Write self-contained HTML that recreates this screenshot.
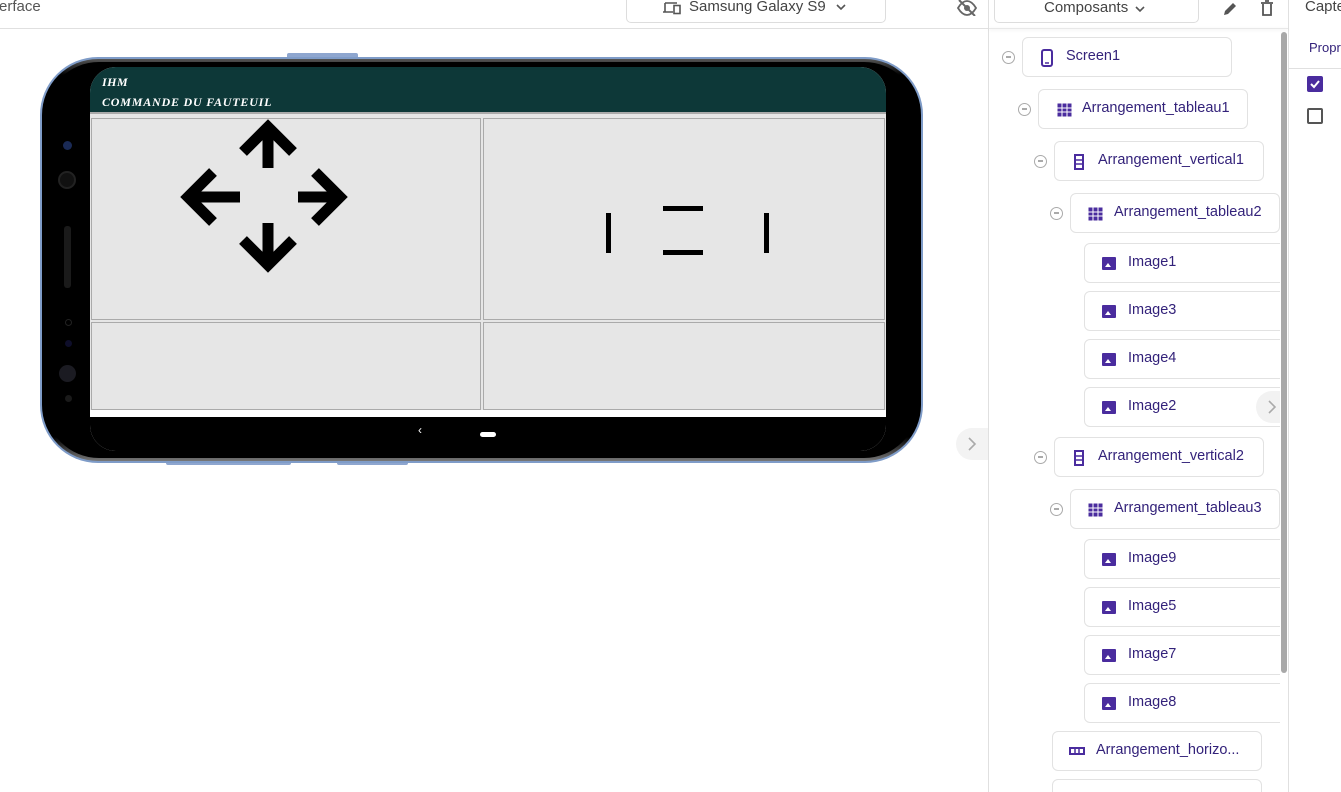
<!DOCTYPE html>
<html style="overflow:hidden;width:1341px;height:792px"><head><meta charset="utf-8"><style>
*{margin:0;padding:0;box-sizing:border-box}
body{width:1341px;height:792px;overflow:hidden;background:#fff;font-family:"Liberation Sans",sans-serif;position:relative}
.a{position:absolute}
.box{position:absolute;border:1px solid #e2e2e2;border-radius:6px;background:#fff;height:40px;color:#33227a;font-size:14.5px;}
.box span{position:absolute;top:10px}
.mi{position:absolute;width:13px;height:13px;border:1.5px solid #aaa;border-radius:50%}
.mi:after{content:"";position:absolute;left:2.5px;top:4.3px;width:5px;height:1.3px;background:#aaa}
.img{position:absolute;left:17px;top:13px;width:14px;height:13px;background:#4a2c9e;border-radius:1px}
.img:after{content:"";position:absolute;left:3px;top:6px;border-left:3px solid transparent;border-right:3px solid transparent;border-bottom:4px solid #fff}
.cell{position:absolute;background:#e6e6e6;border:1px solid #aaa}
#clip{position:absolute;left:989px;top:29px;width:291px;height:763px;overflow:hidden}
#clip > *{margin-left:-989px;margin-top:-29px}
</style></head><body>
<!-- top bar -->
<div class="a" style="left:0;top:28px;width:988px;height:1px;background:#e0e0e0"></div>
<div class="a" style="left:-1px;top:-2px;font-size:15px;color:#555">erface</div>
<div class="a" style="left:626px;top:-6px;width:260px;height:29px;border:1px solid #ddd;border-radius:5px"></div>
<svg class="a" style="left:662px;top:1px" width="20" height="14" viewBox="0 0 20 14"><path d="M3 2h12M3 2v9M1 11h10" stroke="#555" stroke-width="1.6" fill="none"/><rect x="12" y="4.5" width="6" height="8" fill="none" stroke="#555" stroke-width="1.6"/></svg>
<div class="a" style="left:689px;top:-2px;font-size:15px;color:#444">Samsung Galaxy S9</div>
<svg class="a" style="left:836px;top:3px" width="10" height="8"><path d="M1 2l4 4 4-4" stroke="#555" stroke-width="1.6" fill="none"/></svg>
<svg class="a" style="left:957px;top:0" width="20" height="16" viewBox="0 0 20 16"><path d="M1 8c3-5 6-7 9-7s6 2 9 7c-3 5-6 7-9 7s-6-2-9-7z" fill="none" stroke="#666" stroke-width="1.8"/><circle cx="10" cy="8" r="3" fill="#666"/><path d="M2 0l16 16" stroke="#666" stroke-width="2"/></svg>
<div class="a" style="left:988px;top:0;width:1px;height:792px;background:#e0e0e0"></div>
<div class="a" style="left:1288px;top:0;width:1px;height:792px;background:#e0e0e0"></div>
<div class="a" style="left:994px;top:-6px;width:205px;height:29px;border:1px solid #ddd;border-radius:5px;background:#fff"></div>
<div class="a" style="left:1044px;top:-1px;font-size:15px;color:#444">Composants</div>
<svg class="a" style="left:1135px;top:5px" width="10" height="8"><path d="M1 2l4 4 4-4" stroke="#555" stroke-width="1.6" fill="none"/></svg>
<svg class="a" style="left:1222px;top:1px" width="16" height="16"><path d="M2 14l1-4 8-8 3 3-8 8z" fill="#555"/></svg>
<svg class="a" style="left:1260px;top:0" width="14" height="17"><path d="M1 3h12M5 1h4M3 4v11h8V4" fill="none" stroke="#555" stroke-width="1.8"/></svg>
<div class="a" style="left:989px;top:28px;width:299px;height:1px;background:#e8e8e8;box-shadow:0 1px 3px rgba(0,0,0,.1)"></div>
<div class="a" style="left:1305px;top:-2px;font-size:15px;color:#444">Capte</div>
<div class="a" style="left:1309px;top:40px;font-size:13px;color:#33227a">Propr</div>
<div class="a" style="left:1289px;top:68px;width:52px;height:1px;background:#e0e0e0"></div>
<div class="a" style="left:1307px;top:76px;width:16px;height:16px;background:#4a2c9e;border-radius:2px"></div>
<svg class="a" style="left:1308px;top:77px" width="14" height="14"><path d="M3 7l3 3 5-6" stroke="#fff" stroke-width="2" fill="none"/></svg>
<div class="a" style="left:1307px;top:108px;width:16px;height:16px;border:2px solid #555;border-radius:2px"></div>

<!-- phone -->
<div class="a" style="left:166px;top:459px;width:125px;height:6px;background:#8ea6cf;border-radius:2px"></div>
<div class="a" style="left:337px;top:459px;width:71px;height:6px;background:#8ea6cf;border-radius:2px"></div>
<div class="a" style="left:287px;top:53px;width:71px;height:6px;background:#8ea6cf;border-radius:2px"></div>
<div class="a" style="left:40px;top:57px;width:883px;height:406px;border-radius:58px;background:#7f9cc8"></div>
<div class="a" style="left:42px;top:59px;width:879px;height:402px;border-radius:56px;background:linear-gradient(#555,#000 4%,#000 94%,#777)"></div>
<div class="a" style="left:45px;top:62px;width:873px;height:396px;border-radius:54px;background:#000"></div>
<div class="a" style="left:63px;top:141px;width:9px;height:9px;border-radius:50%;background:#1a2a55"></div>
<div class="a" style="left:58px;top:171px;width:18px;height:18px;border-radius:50%;background:#111;border:2px solid #222"></div>
<div class="a" style="left:64px;top:226px;width:7px;height:62px;border-radius:3px;background:#1a1a1a"></div>
<div class="a" style="left:65px;top:319px;width:7px;height:7px;border-radius:50%;border:1px solid #222"></div>
<div class="a" style="left:65px;top:340px;width:7px;height:7px;border-radius:50%;background:#0e0e2a"></div>
<div class="a" style="left:59px;top:365px;width:17px;height:17px;border-radius:50%;background:#1b1b22"></div>
<div class="a" style="left:65px;top:395px;width:7px;height:7px;border-radius:50%;background:#1a1a1a"></div>
<!-- screen -->
<div class="a" style="left:90px;top:67px;width:796px;height:384px;border-radius:26px;overflow:hidden;background:#fff">
 <div class="a" style="left:0;top:0;width:796px;height:45px;background:#0d3838"></div>
 <div class="a" style="left:12px;top:8px;font:italic bold 12px 'Liberation Serif',serif;color:#fff;letter-spacing:.5px">IHM</div>
 <div class="a" style="left:12px;top:28px;font:italic bold 12px 'Liberation Serif',serif;color:#fff;letter-spacing:.8px">COMMANDE DU FAUTEUIL</div>
 <div class="a" style="left:0;top:45px;width:796px;height:298px;background:#e6e6e6;border-top:2px solid #aaa"></div>
 <div class="cell" style="left:1px;top:51px;width:390px;height:202px"></div>
 <div class="cell" style="left:393px;top:51px;width:402px;height:202px"></div>
 <div class="cell" style="left:1px;top:255px;width:390px;height:88px"></div>
 <div class="cell" style="left:393px;top:255px;width:402px;height:88px"></div>
 <div class="a" style="left:0;top:350px;width:796px;height:34px;background:#000"></div>
 <div class="a" style="left:328px;top:356px;color:#fff;font-size:12px">‹</div>
 <div class="a" style="left:390px;top:365px;width:16px;height:5px;border-radius:3px;background:#fff"></div>
</div>
<svg class="a" style="left:170px;top:115px" width="190" height="165">
 <g stroke="#000" stroke-width="11" fill="none" stroke-linejoin="miter" stroke-miterlimit="10">
  <path d="M98 53V12M73 37l25-25 25 25"/>
  <path d="M98 108V150M73 125l25 25 25-25"/>
  <path d="M70 82H18M43 57l-25 25 25 25"/>
  <path d="M128 82h42M145 57l25 25-25 25"/>
 </g>
</svg>
<div class="a" style="left:606px;top:213px;width:5px;height:40px;background:#000"></div>
<div class="a" style="left:764px;top:213px;width:5px;height:40px;background:#000"></div>
<div class="a" style="left:663px;top:206px;width:40px;height:5px;background:#000"></div>
<div class="a" style="left:663px;top:250px;width:40px;height:5px;background:#000"></div>
<div class="a" style="left:956px;top:428px;width:32px;height:32px;border-radius:16px 0 0 16px;background:#f3f3f3"></div>
<svg class="a" style="left:967px;top:437px" width="10" height="14"><path d="M2 1l6 6-6 6" stroke="#aaa" stroke-width="1.6" fill="none"/></svg>

<!-- tree -->
<div id="clip"><div class="a" style="left:0;top:0;width:1341px;height:792px">
<div class="mi" style="left:1002px;top:51px"></div>
<div class="box" style="left:1022px;top:37px;width:210px"><svg class="a" style="left:18px;top:11px" width="12" height="18"><rect x="1" y="1" width="10" height="16" rx="2" fill="none" stroke="#4a2c9e" stroke-width="2"/><path d="M4 14h4" stroke="#4a2c9e" stroke-width="1.5"/></svg><span style="left:43px">Screen1</span></div>
<div class="mi" style="left:1018px;top:103px"></div>
<div class="box" style="left:1038px;top:89px;width:210px"><svg class="a" style="left:18px;top:13px" width="15" height="14"><rect x="0.5" y="0.5" width="14" height="13" fill="#4a2c9e"/><path d="M0 5h15M0 9h15M5 0v14M10 0v14" stroke="#fff" stroke-width="1"/></svg><span style="left:43px">Arrangement_tableau1</span></div>
<div class="mi" style="left:1034px;top:155px"></div>
<div class="box" style="left:1054px;top:141px;width:210px"><svg class="a" style="left:19px;top:12px" width="10" height="16"><rect x="1" y="1" width="8" height="14" fill="none" stroke="#4a2c9e" stroke-width="2"/><path d="M1 6h8M1 10h8" stroke="#4a2c9e" stroke-width="1.5"/></svg><span style="left:43px">Arrangement_vertical1</span></div>
<div class="mi" style="left:1050px;top:207px"></div>
<div class="box" style="left:1070px;top:193px;width:210px"><svg class="a" style="left:17px;top:13px" width="15" height="14"><rect x="0.5" y="0.5" width="14" height="13" fill="#4a2c9e"/><path d="M0 5h15M0 9h15M5 0v14M10 0v14" stroke="#fff" stroke-width="1"/></svg><span style="left:43px">Arrangement_tableau2</span></div>
<div class="box" style="left:1084px;top:243px;width:220px"><div class="img"></div><span style="left:43px">Image1</span></div>
<div class="box" style="left:1084px;top:291px;width:220px"><div class="img"></div><span style="left:43px">Image3</span></div>
<div class="box" style="left:1084px;top:339px;width:220px"><div class="img"></div><span style="left:43px">Image4</span></div>
<div class="box" style="left:1084px;top:387px;width:220px"><div class="img"></div><span style="left:43px">Image2</span></div>
<div class="a" style="left:1256px;top:391px;width:30px;height:32px;border-radius:16px 0 0 16px;background:#f2f2f2"></div>
<svg class="a" style="left:1267px;top:400px" width="10" height="14"><path d="M2 1l6 6-6 6" stroke="#aaa" stroke-width="1.6" fill="none"/></svg>
<div class="mi" style="left:1034px;top:451px"></div>
<div class="box" style="left:1054px;top:437px;width:210px"><svg class="a" style="left:19px;top:12px" width="10" height="16"><rect x="1" y="1" width="8" height="14" fill="none" stroke="#4a2c9e" stroke-width="2"/><path d="M1 6h8M1 10h8" stroke="#4a2c9e" stroke-width="1.5"/></svg><span style="left:43px">Arrangement_vertical2</span></div>
<div class="mi" style="left:1050px;top:503px"></div>
<div class="box" style="left:1070px;top:489px;width:210px"><svg class="a" style="left:17px;top:13px" width="15" height="14"><rect x="0.5" y="0.5" width="14" height="13" fill="#4a2c9e"/><path d="M0 5h15M0 9h15M5 0v14M10 0v14" stroke="#fff" stroke-width="1"/></svg><span style="left:43px">Arrangement_tableau3</span></div>
<div class="box" style="left:1084px;top:539px;width:220px"><div class="img"></div><span style="left:43px">Image9</span></div>
<div class="box" style="left:1084px;top:587px;width:220px"><div class="img"></div><span style="left:43px">Image5</span></div>
<div class="box" style="left:1084px;top:635px;width:220px"><div class="img"></div><span style="left:43px">Image7</span></div>
<div class="box" style="left:1084px;top:683px;width:220px"><div class="img"></div><span style="left:43px">Image8</span></div>
<div class="box" style="left:1052px;top:731px;width:210px"><svg class="a" style="left:16px;top:15px" width="16" height="8"><rect x="1" y="1" width="14" height="6" fill="none" stroke="#4a2c9e" stroke-width="2"/><path d="M6 1v6M10 1v6" stroke="#4a2c9e" stroke-width="1.5"/></svg><span style="left:43px">Arrangement_horizo...</span></div>
<div class="box" style="left:1052px;top:779px;width:210px"></div>
</div></div>
<div class="a" style="left:1281px;top:32px;width:6px;height:641px;border-radius:3px;background:#a8a8a8"></div>
</body></html>
